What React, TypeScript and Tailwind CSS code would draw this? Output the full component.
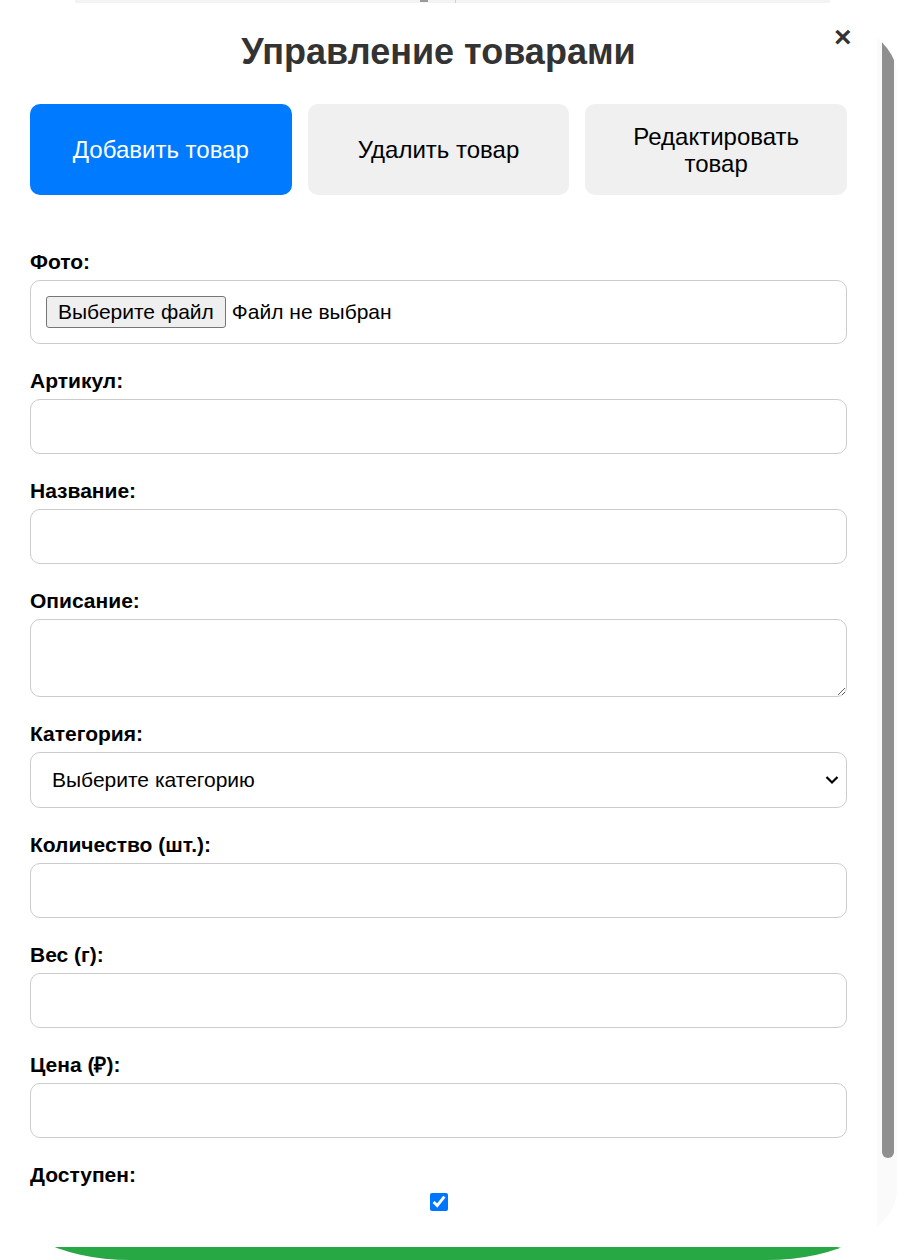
import React from "react";

const labelCls = "block text-[21px] leading-[22px] font-bold text-black mb-[7px]";
const inputCls =
  "block w-full h-[55px] border border-[#cccccc] rounded-[10px] px-[15px] text-[21px] outline-none bg-white";

function Field({ label, children }: { label: string; children: React.ReactNode }) {
  return (
    <div className="mb-[26px]">
      <label className={labelCls}>{label}</label>
      {children}
    </div>
  );
}

export default function App() {
  return (
    <div className="h-[1260px] w-[900px] overflow-hidden bg-white font-['Liberation_Sans',Arial,sans-serif]">
      {/* page behind the modal */}
      <div className="h-[5px] pl-[75px]">
        <div className="relative h-[3px] w-[755px] bg-[#f3f3f3]">
          <div className="absolute left-[345px] top-0 h-[2px] w-[8px] bg-[#9a9a9a]" />
          <div className="absolute left-[380px] top-0 h-[3px] w-[1px] bg-[#d0d0d0]" />
        </div>
      </div>

      <div className="relative w-[897px] h-[1255px] overflow-hidden rounded-[130px_/_70px] bg-white">
        <div className="w-[877px] pl-[30px] pr-[30px] pt-[26px]">
          <h2 className="text-center text-[36px] leading-[41px] font-bold text-[#333333]">
            Управление товарами
          </h2>

          <div className="mt-[32px] grid grid-cols-3 gap-[16px]">
            <button className="h-[91px] rounded-[10px] bg-[#007bff] px-[20px] text-[24px] leading-[27px] text-white">
              Добавить товар
            </button>
            <button className="h-[91px] rounded-[10px] bg-[#f0f0f0] px-[20px] text-[24px] leading-[27px] text-black">
              Удалить товар
            </button>
            <button className="h-[91px] rounded-[10px] bg-[#f0f0f0] px-[20px] text-[24px] leading-[27px] text-black">
              Редактировать товар
            </button>
          </div>

          <form className="mt-[56px]">
            <Field label="Фото:">
              <div className="flex h-[64px] items-center rounded-[10px] border border-[#cccccc] px-[15px] text-[21px] text-black">
                <span className="flex h-[32px] items-center rounded-[3px] border border-[#767676] bg-[#efefef] px-[11px]">
                  Выберите файл
                </span>
                <span className="ml-[6px]">Файл не выбран</span>
              </div>
            </Field>

            <Field label="Артикул:">
              <input type="text" className={inputCls} />
            </Field>

            <Field label="Название:">
              <input type="text" className={inputCls} />
            </Field>

            <Field label="Описание:">
              <textarea className="block w-full h-[78px] border border-[#cccccc] rounded-[10px] px-[15px] py-[10px] text-[21px] outline-none" />
            </Field>

            <Field label="Категория:">
              <div className="relative">
                <select className="block w-full h-[56px] appearance-none border border-[#cccccc] rounded-[10px] bg-white pl-[21px] pr-[40px] text-[21px] text-black outline-none">
                  <option>Выберите категорию</option>
                </select>
                <svg
                  className="pointer-events-none absolute right-[8px] top-[23px]"
                  width="14"
                  height="10"
                  viewBox="0 0 14 10"
                  fill="none"
                  stroke="#000"
                  strokeWidth="2.2"
                >
                  <path d="M1.5 2 L7 7.5 L12.5 2" />
                </svg>
              </div>
            </Field>

            <Field label="Количество (шт.):">
              <input type="number" className={inputCls} />
            </Field>

            <Field label="Вес (г):">
              <input type="number" className={inputCls} />
            </Field>

            <Field label="Цена (₽):">
              <input type="number" className={inputCls} />
            </Field>

            <div className="mb-[36px]">
              <label className={labelCls}>Доступен:</label>
              <div className="flex justify-center">
                <input type="checkbox" defaultChecked className="m-0 h-[18px] w-[18px] accent-[#0075ff]" />
              </div>
            </div>

            <button
              type="button"
              aria-label="Сохранить"
              className="block h-[56px] w-full rounded-[10px] bg-[#28a745]"
            />
          </form>
        </div>

        {/* scrollbar */}
        <div className="absolute right-0 top-0 h-full w-[20px] bg-[#fafafa]">
          <div className="ml-[5px] mt-[4px] h-[1149px] w-[12px] rounded-full bg-[#8f8f8f]" />
        </div>

        <span className="absolute left-[834px] top-[17px] text-[30px] leading-none font-bold text-[#333333]">
          ×
        </span>
      </div>
    </div>
  );
}
